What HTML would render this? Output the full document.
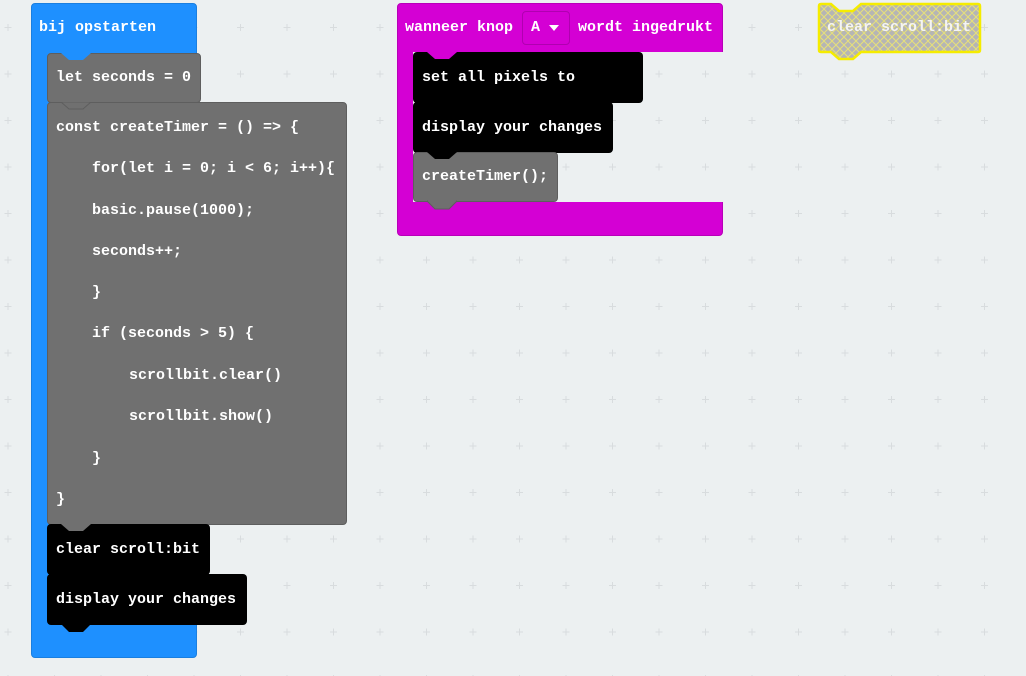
<!DOCTYPE html>
<html><head><style>
body{margin:0;width:1026px;height:676px;overflow:hidden;background:#ecf0f1;position:relative;font-family:"Liberation Mono",monospace;font-weight:bold;font-size:15px;color:#fff}
.b{position:absolute;box-sizing:border-box}
.t{position:absolute;white-space:pre;line-height:18px;margin-top:1px}
.r{border-radius:4px}
svg{position:absolute;left:0;top:0}
</style></head><body>
<svg width="1026" height="676">
<defs><pattern id="g" x="-0.5" y="4" width="46.5" height="46.5" patternUnits="userSpaceOnUse">
<path d="M5 23.5h7M8.5 20v7" stroke="#d8dcde" stroke-width="1"/></pattern>
<pattern id="h" width="8" height="8" patternUnits="userSpaceOnUse"><path d="M0 0L8 8M8 0L0 8" stroke="#e6e07a" stroke-width="1"/></pattern></defs>
<rect width="1026" height="676" fill="url(#g)"/>
</svg>

<div class="b r" style="left:31px;top:3px;width:166px;height:655px;background:#1e90ff;border:1px solid #1a7fe0"></div>
<div class="t" style="left:39px;top:18px">bij opstarten</div>

<div class="b r" style="left:47px;top:53px;width:154px;height:50px;background:#707070;border:1px solid #5e5e5e"></div>
<svg style="left:61px;top:53px" width="30" height="8"><path d="M0 0L8 7H22L30 0Z" fill="#1e90ff"/></svg>
<div class="t" style="left:56px;top:68px">let seconds = 0</div>

<div class="b r" style="left:47px;top:102px;width:300px;height:423px;background:#707070;border:1px solid #5e5e5e"></div>
<svg style="left:61px;top:102px" width="30" height="8"><path d="M0 0L8 7H22L30 0Z" fill="#707070" stroke="#5e5e5e"/></svg>
<div class="t" style="left:56px;top:118px">const createTimer = () =&gt; {</div>
<div class="t" style="left:92px;top:159px">for(let i = 0; i &lt; 6; i++){</div>
<div class="t" style="left:92px;top:201px">basic.pause(1000);</div>
<div class="t" style="left:92px;top:242px">seconds++;</div>
<div class="t" style="left:92px;top:283px">}</div>
<div class="t" style="left:92px;top:324px">if (seconds &gt; 5) {</div>
<div class="t" style="left:129px;top:366px">scrollbit.clear()</div>
<div class="t" style="left:129px;top:407px">scrollbit.show()</div>
<div class="t" style="left:92px;top:449px">}</div>
<div class="t" style="left:56px;top:490px">}</div>

<div class="b r" style="left:47px;top:524px;width:163px;height:51px;background:#000"></div>
<svg style="left:61px;top:524px" width="30" height="8"><path d="M0 0L8 7H22L30 0Z" fill="#707070"/></svg>
<div class="t" style="left:56px;top:540px">clear scroll:bit</div>
<div class="b r" style="left:47px;top:574px;width:200px;height:51px;background:#000"></div>
<svg style="left:61px;top:624px" width="30" height="9"><path d="M0 0L8 8H22L30 0Z" fill="#000"/></svg>
<div class="t" style="left:56px;top:590px">display your changes</div>

<div class="b r" style="left:397px;top:3px;width:326px;height:233px;background:#d400d4;border:1px solid #b800b8"></div>
<div class="b" style="left:413px;top:52px;width:310px;height:150px;background:#ecf0f1"></div>
<svg width="326" height="150" style="left:413px;top:52px"><rect x="413" y="52" width="326" height="150" fill="url(#g)" transform="translate(-413,-52)"/></svg>
<div class="t" style="left:405px;top:18px">wanneer knop</div>
<div class="b r" style="left:522px;top:11px;width:48px;height:34px;background:#d400d4;border:1px solid #b000b0"></div>
<div class="t" style="left:531px;top:18px">A</div>
<svg style="left:548px;top:24px" width="12" height="8"><path d="M1 1H11L6 7Z" fill="#fff"/></svg>
<div class="t" style="left:578px;top:18px">wordt ingedrukt</div>

<div class="b r" style="left:413px;top:52px;width:230px;height:51px;background:#000"></div>
<svg style="left:427px;top:52px" width="30" height="8"><path d="M0 0L8 7H22L30 0Z" fill="#d400d4"/></svg>
<div class="t" style="left:422px;top:68px">set all pixels to</div>
<div class="b r" style="left:413px;top:102px;width:200px;height:51px;background:#000"></div>
<div class="t" style="left:422px;top:118px">display your changes</div>
<div class="b r" style="left:413px;top:152px;width:145px;height:50px;background:#707070;border:1px solid #5e5e5e"></div>
<svg style="left:427px;top:152px" width="30" height="8"><path d="M0 0L8 7H22L30 0Z" fill="#000"/></svg>
<svg style="left:427px;top:200px" width="30" height="11"><path d="M0 1L8 9H22L30 1Z" fill="#707070" stroke="#5e5e5e"/><path d="M1 0H29" stroke="#707070" stroke-width="3"/></svg>
<div class="t" style="left:422px;top:167px">createTimer();</div>

<svg style="left:816px;top:1px" width="168" height="64">
<path d="M3 5Q3 3 5 3H15L23 10H37L45 3H162Q164 3 164 5V49Q164 51 162 51H45L37 58H23L15 51H5Q3 51 3 49Z" fill="#b5b5b5"/>
<path d="M3 5Q3 3 5 3H15L23 10H37L45 3H162Q164 3 164 5V49Q164 51 162 51H45L37 58H23L15 51H5Q3 51 3 49Z" fill="url(#h)" stroke="#f5ec00" stroke-width="2.5"/>
</svg>
<div class="t" style="left:827px;top:18px;color:#f4f4f4">clear scroll:bit</div>
</body></html>
